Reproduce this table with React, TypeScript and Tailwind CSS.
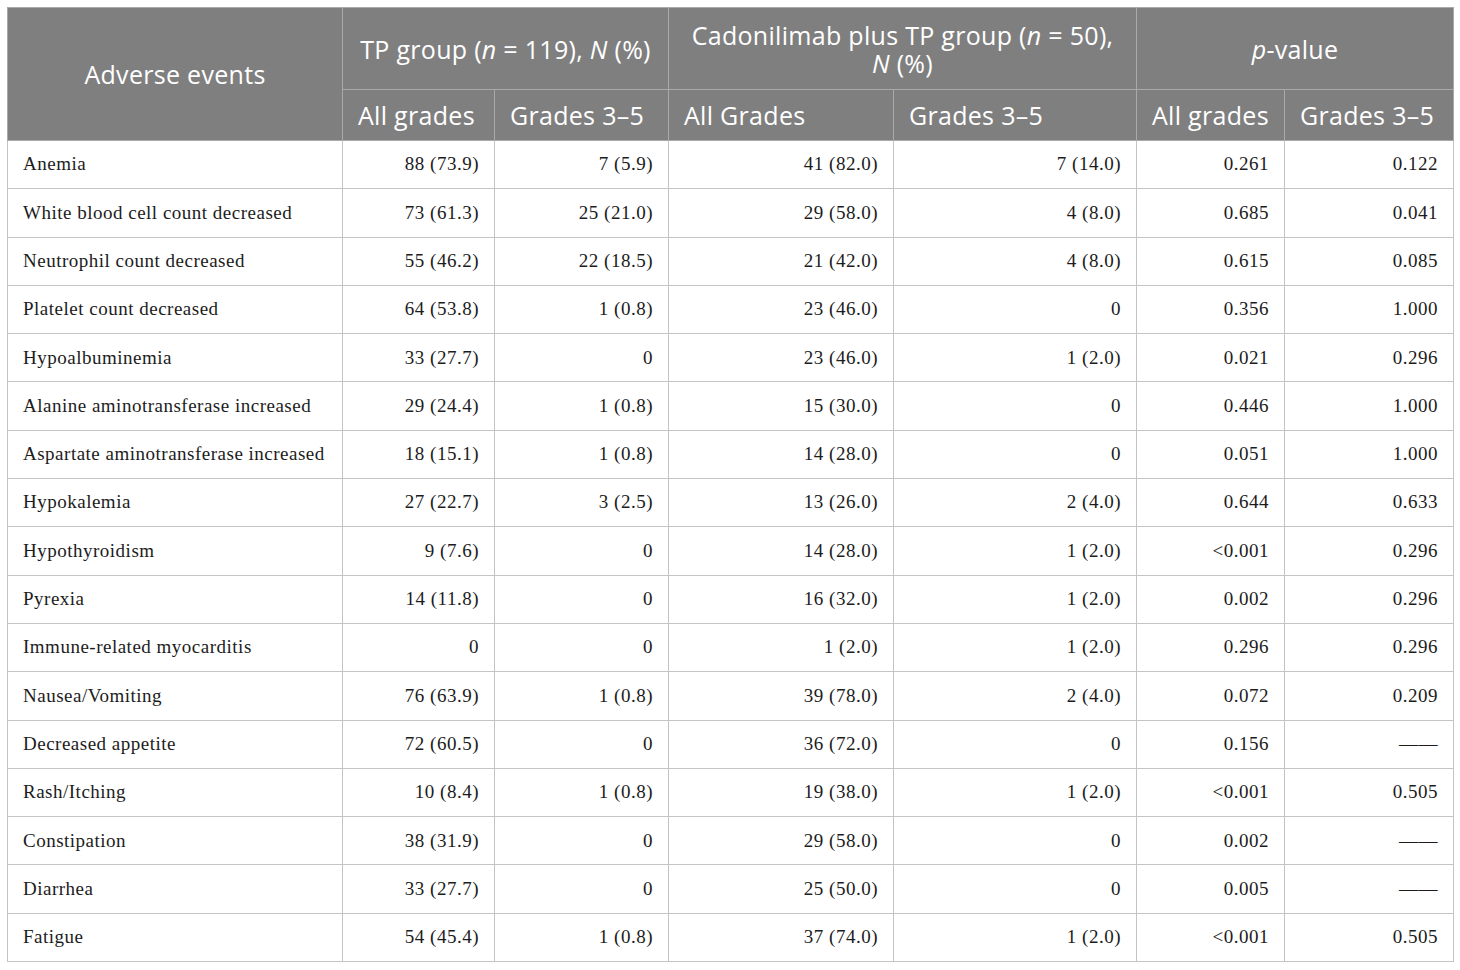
import React from "react";

type Row = [string, string, string, string, string, string, string];

const rows: Row[] = [
  ["Anemia", "88 (73.9)", "7 (5.9)", "41 (82.0)", "7 (14.0)", "0.261", "0.122"],
  ["White blood cell count decreased", "73 (61.3)", "25 (21.0)", "29 (58.0)", "4 (8.0)", "0.685", "0.041"],
  ["Neutrophil count decreased", "55 (46.2)", "22 (18.5)", "21 (42.0)", "4 (8.0)", "0.615", "0.085"],
  ["Platelet count decreased", "64 (53.8)", "1 (0.8)", "23 (46.0)", "0", "0.356", "1.000"],
  ["Hypoalbuminemia", "33 (27.7)", "0", "23 (46.0)", "1 (2.0)", "0.021", "0.296"],
  ["Alanine aminotransferase increased", "29 (24.4)", "1 (0.8)", "15 (30.0)", "0", "0.446", "1.000"],
  ["Aspartate aminotransferase increased", "18 (15.1)", "1 (0.8)", "14 (28.0)", "0", "0.051", "1.000"],
  ["Hypokalemia", "27 (22.7)", "3 (2.5)", "13 (26.0)", "2 (4.0)", "0.644", "0.633"],
  ["Hypothyroidism", "9 (7.6)", "0", "14 (28.0)", "1 (2.0)", "<0.001", "0.296"],
  ["Pyrexia", "14 (11.8)", "0", "16 (32.0)", "1 (2.0)", "0.002", "0.296"],
  ["Immune-related myocarditis", "0", "0", "1 (2.0)", "1 (2.0)", "0.296", "0.296"],
  ["Nausea/Vomiting", "76 (63.9)", "1 (0.8)", "39 (78.0)", "2 (4.0)", "0.072", "0.209"],
  ["Decreased appetite", "72 (60.5)", "0", "36 (72.0)", "0", "0.156", "——"],
  ["Rash/Itching", "10 (8.4)", "1 (0.8)", "19 (38.0)", "1 (2.0)", "<0.001", "0.505"],
  ["Constipation", "38 (31.9)", "0", "29 (58.0)", "0", "0.002", "——"],
  ["Diarrhea", "33 (27.7)", "0", "25 (50.0)", "0", "0.005", "——"],
  ["Fatigue", "54 (45.4)", "1 (0.8)", "37 (74.0)", "1 (2.0)", "<0.001", "0.505"],
];

const widths = [335, 152, 174, 225, 243, 148, 169];

const headCell =
  "border border-[#a9a9a9] bg-[#7f7f7f] text-white font-normal px-[15px] leading-[28px]";

export default function App() {
  return (
    <div className="bg-white w-[1460px] h-[970px] pt-[7px] pl-[7px]">
      <table
        className="border-collapse table-fixed text-[#1c1c1c]"
        style={{ width: 1447 }}
      >
        <colgroup>
          {widths.map((w, i) => (
            <col key={i} style={{ width: w }} />
          ))}
        </colgroup>
        <thead className="font-['Open_Sans',sans-serif] text-[25px] tracking-[0.3px]">
          <tr className="h-[82px]">
            <th rowSpan={2} className={`${headCell} text-center`}>
              Adverse events
            </th>
            <th colSpan={2} className={`${headCell} text-center`}>
              TP group (<i>n</i> = 119), <i>N</i> (%)
            </th>
            <th colSpan={2} className={`${headCell} text-center px-[10px]`}>
              Cadonilimab plus TP group (<i>n</i> = 50),
              <br />
              <i>N</i> (%)
            </th>
            <th colSpan={2} className={`${headCell} text-center`}>
              <i>p</i>-value
            </th>
          </tr>
          <tr className="h-[51px]">
            <th className={`${headCell} text-left`}>All grades</th>
            <th className={`${headCell} text-left`}>Grades 3–5</th>
            <th className={`${headCell} text-left`}>All Grades</th>
            <th className={`${headCell} text-left`}>Grades 3–5</th>
            <th className={`${headCell} text-left`}>All grades</th>
            <th className={`${headCell} text-left`}>Grades 3–5</th>
          </tr>
        </thead>
        <tbody className="font-['Liberation_Serif',serif] text-[19px] tracking-[0.5px]">
          {rows.map((row) => (
            <tr key={row[0]} className="h-[48.3px]">
              {row.map((cell, i) => (
                <td
                  key={i}
                  className={`border border-[#c4c4c4] px-[15px] ${
                    i === 0 ? "text-left" : "text-right"
                  }`}
                >
                  {cell}
                </td>
              ))}
            </tr>
          ))}
        </tbody>
      </table>
    </div>
  );
}
